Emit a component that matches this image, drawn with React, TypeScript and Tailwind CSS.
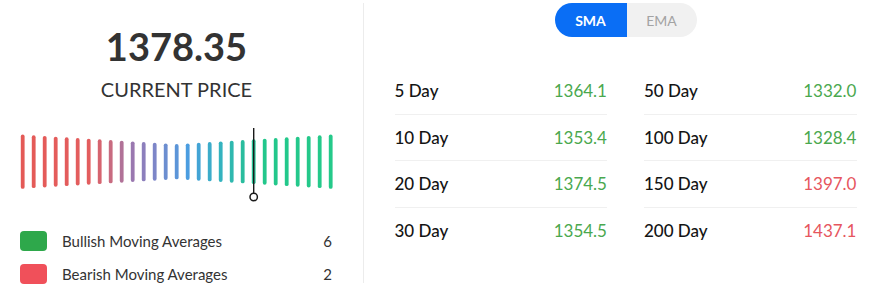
import React from "react";

const BAR_COUNT = 29;
const STOPS: [number, string][] = [
  [0, "#e45a57"],
  [6, "#e35d5e"],
  [8, "#c86b80"],
  [10, "#9a78b0"],
  [12, "#7d86c8"],
  [15, "#4b9de0"],
  [18, "#34b3bf"],
  [20, "#2abd9e"],
  [22, "#22c78b"],
  [28, "#25c98a"],
];

function hex(c: string) {
  return [1, 3, 5].map((i) => parseInt(c.slice(i, i + 2), 16));
}

function colorAt(i: number) {
  for (let s = 0; s < STOPS.length - 1; s++) {
    const [a, ca] = STOPS[s];
    const [b, cb] = STOPS[s + 1];
    if (i >= a && i <= b) {
      const t = (i - a) / (b - a);
      const x = hex(ca);
      const y = hex(cb);
      const m = x.map((v, k) => Math.round(v + (y[k] - v) * t));
      return `rgb(${m[0]},${m[1]},${m[2]})`;
    }
  }
  return STOPS[STOPS.length - 1][1];
}

const rows = [
  { left: ["5 Day", "1364.1", true], right: ["50 Day", "1332.0", true] },
  { left: ["10 Day", "1353.4", true], right: ["100 Day", "1328.4", true] },
  { left: ["20 Day", "1374.5", true], right: ["150 Day", "1397.0", false] },
  { left: ["30 Day", "1354.5", true], right: ["200 Day", "1437.1", false] },
] as const;

function BarGauge() {
  const cy = 38.7;
  return (
    <svg width="314" height="80" viewBox="0 0 314 80" className="block">
      {Array.from({ length: BAR_COUNT }).map((_, i) => {
        const h = 35 + 19 * (Math.abs(i - 14) / 14);
        const x = 2.7 + 11 * i;
        return (
          <line
            key={i}
            x1={x}
            x2={x}
            y1={cy - h / 2 + 1.8}
            y2={cy + h / 2 - 1.8}
            stroke={colorAt(i)}
            strokeWidth={3.8}
            strokeLinecap="round"
          />
        );
      })}
      <line x1={233.7} x2={233.7} y1={5} y2={70.3} stroke="#1a1a1a" strokeWidth={1.4} />
      <circle cx={233.7} cy={74} r={3.7} fill="#fff" stroke="#1a1a1a" strokeWidth={1.5} />
    </svg>
  );
}

function Cell({ label, value, up }: { label: string; value: string; up: boolean }) {
  return (
    <div className="flex items-center justify-between">
      <span className="font-medium text-[#141414]">{label}</span>
      <span className={up ? "text-[#4aa84e]" : "text-[#e6565e]"}>{value}</span>
    </div>
  );
}

export default function App() {
  return (
    <div className="flex w-[883px] h-[298px] bg-white font-['Lato','Noto_Sans',sans-serif]">
      <div className="w-[364px] mt-[3px] h-[280px] border-r border-[#ececec] pl-5 pr-[30px] flex flex-col">
        <div className="flex flex-col items-center">
          <div className="mt-[23.5px] text-[38px] leading-[38px] font-bold text-[#333]">1378.35</div>
          <div className="mt-[14px] text-[20px] leading-[20px] text-[#333]">CURRENT PRICE</div>
        </div>
        <div className="mt-[24px]">
          <BarGauge />
        </div>
        <div className="mt-[22px] flex flex-col text-[15px] text-[#333]">
          <div className="flex items-center h-[33px]">
            <span className="w-[27px] h-[20px] rounded-[4px] bg-[#2ea84b]" />
            <span className="ml-[15px] flex-1">Bullish Moving Averages</span>
            <span className="pr-[1px]">6</span>
          </div>
          <div className="flex items-center h-[33px]">
            <span className="w-[27px] h-[20px] rounded-[4px] bg-[#f0505a]" />
            <span className="ml-[15px] flex-1">Bearish Moving Averages</span>
            <span className="pr-[1px]">2</span>
          </div>
        </div>
      </div>
      <div className="flex-1 flex flex-col items-center pt-[3px]">
        <div className="flex h-[34px] rounded-full overflow-hidden text-[14px] ml-[4px]">
          <div className="w-[72px] bg-[#0a6ef5] text-white font-bold flex items-center justify-center">SMA</div>
          <div className="w-[70px] bg-[#f1f1f1] text-[#a3a3a3] flex items-center justify-center">EMA</div>
        </div>
        <div className="mt-[31px] ml-[4px] w-[462px] grid grid-cols-2 gap-x-[37px] text-[17px]">
          {rows.map((r, i) => (
            <React.Fragment key={i}>
              <div className={`h-[46.5px] flex flex-col justify-center ${i < 3 ? "border-b border-[#f0f0f0]" : ""}`}>
                <Cell label={r.left[0]} value={r.left[1]} up={r.left[2]} />
              </div>
              <div className={`h-[46.5px] flex flex-col justify-center ${i < 3 ? "border-b border-[#f0f0f0]" : ""}`}>
                <Cell label={r.right[0]} value={r.right[1]} up={r.right[2]} />
              </div>
            </React.Fragment>
          ))}
        </div>
      </div>
    </div>
  );
}
